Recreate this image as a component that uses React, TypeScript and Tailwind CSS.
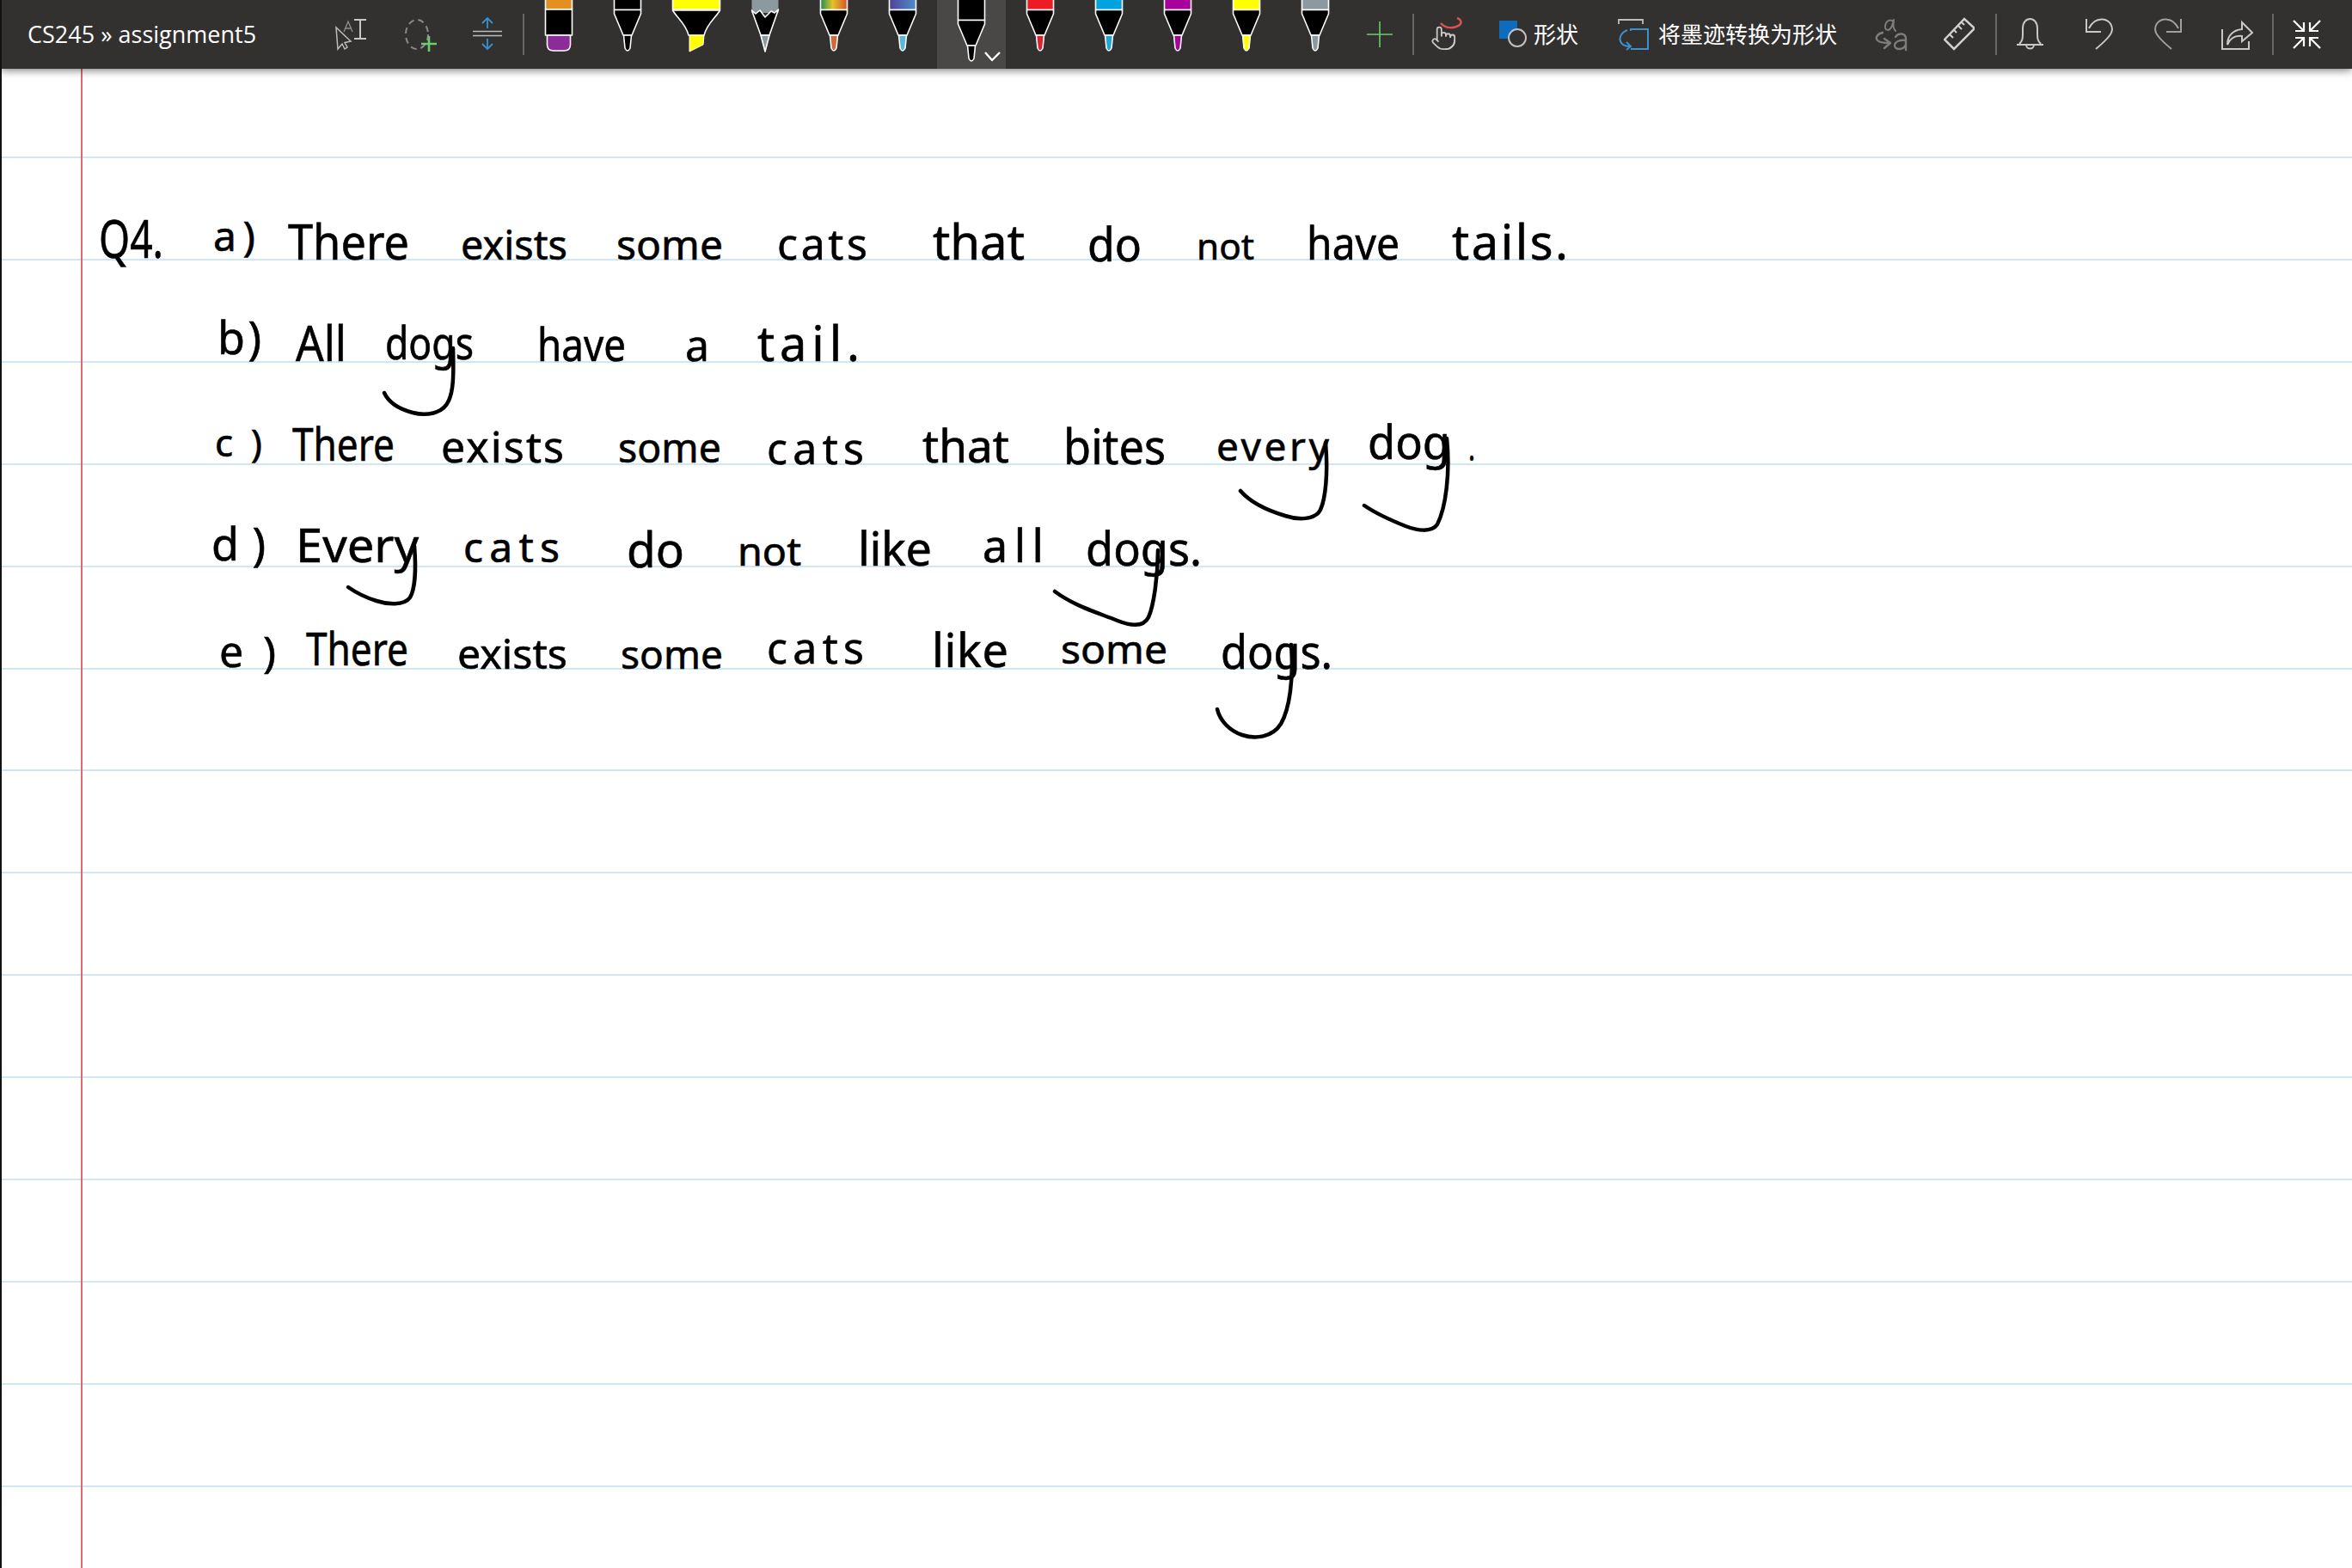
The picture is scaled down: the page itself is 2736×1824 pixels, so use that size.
import React from "react";

type Word = { t: string; x: number; x2: number; y: number; s: number; loose?: boolean };

const WORDS: Word[] = [
  // line 1
  { t: "Q4.", x: 115, x2: 190, y: 300, s: 62 },
  { t: "a)", x: 248, x2: 297, y: 292, s: 48, loose: true },
  { t: "There", x: 335, x2: 476, y: 302, s: 56 },
  { t: "exists", x: 536, x2: 660, y: 302, s: 48 },
  { t: "some", x: 717, x2: 841, y: 302, s: 48 },
  { t: "cats", x: 904, x2: 1009, y: 302, s: 50, loose: true },
  { t: "that", x: 1085, x2: 1192, y: 302, s: 56 },
  { t: "do", x: 1265, x2: 1328, y: 304, s: 54 },
  { t: "not", x: 1392, x2: 1459, y: 302, s: 42 },
  { t: "have", x: 1520, x2: 1628, y: 302, s: 52 },
  { t: "tails.", x: 1689, x2: 1824, y: 302, s: 56, loose: true },
  // line 2
  { t: "b)", x: 253, x2: 304, y: 412, s: 52, loose: true },
  { t: "All", x: 344, x2: 403, y: 420, s: 56 },
  { t: "dogs", x: 448, x2: 551, y: 418, s: 52 },
  { t: "have", x: 625, x2: 728, y: 420, s: 52 },
  { t: "a", x: 797, x2: 832, y: 420, s: 50, loose: true },
  { t: "tail.", x: 881, x2: 1000, y: 420, s: 56, loose: true },
  // line 3
  { t: "c)", x: 250, x2: 305, y: 531, s: 44, loose: true },
  { t: "There", x: 340, x2: 459, y: 536, s: 52 },
  { t: "exists", x: 513, x2: 656, y: 538, s: 50, loose: true },
  { t: "some", x: 719, x2: 839, y: 538, s: 47 },
  { t: "cats", x: 892, x2: 1005, y: 540, s: 50, loose: true },
  { t: "that", x: 1073, x2: 1174, y: 538, s: 53 },
  { t: "bites", x: 1237, x2: 1356, y: 540, s: 56 },
  { t: "every", x: 1415, x2: 1546, y: 536, s: 46, loose: true },
  { t: "dog", x: 1591, x2: 1687, y: 534, s: 54 },
  { t: ".", x: 1708, x2: 1716, y: 536, s: 44 },
  // line 4
  { t: "d)", x: 246, x2: 309, y: 652, s: 52, loose: true },
  { t: "Every", x: 344, x2: 487, y: 654, s: 54 },
  { t: "cats", x: 539, x2: 651, y: 654, s: 48, loose: true },
  { t: "do", x: 729, x2: 796, y: 660, s: 56 },
  { t: "not", x: 858, x2: 932, y: 658, s: 46 },
  { t: "like", x: 998, x2: 1084, y: 658, s: 54, loose: true },
  { t: "all", x: 1143, x2: 1214, y: 654, s: 52, loose: true },
  { t: "dogs.", x: 1263, x2: 1398, y: 658, s: 54 },
  // line 5
  { t: "e)", x: 255, x2: 321, y: 776, s: 50, loose: true },
  { t: "There", x: 356, x2: 475, y: 774, s: 52 },
  { t: "exists", x: 532, x2: 660, y: 778, s: 48 },
  { t: "some", x: 722, x2: 841, y: 778, s: 46 },
  { t: "cats", x: 892, x2: 1005, y: 772, s: 50, loose: true },
  { t: "like", x: 1084, x2: 1173, y: 776, s: 54, loose: true },
  { t: "some", x: 1234, x2: 1358, y: 772, s: 46 },
  { t: "dogs.", x: 1420, x2: 1550, y: 778, s: 54 },
];

// long pen strokes under g and y
const TAILS = [
  "M527 405 C528 440 527 455 522 466 C515 482 495 484 480 480 C465 476 452 468 447 457",
  "M1542 515 C1545 550 1542 580 1536 593 C1530 605 1510 605 1495 600 C1475 594 1455 585 1443 571",
  "M1683 510 C1687 550 1682 590 1672 610 C1665 620 1648 617 1635 612 C1620 606 1600 597 1587 588",
  "M482 635 C484 660 483 685 477 695 C470 705 450 703 438 699 C425 695 415 690 405 683",
  "M1347 640 C1347 670 1342 705 1336 718 C1330 730 1315 728 1300 722 C1275 712 1250 705 1227 688",
  "M1502 750 C1505 790 1500 825 1490 842 C1480 858 1460 860 1445 855 C1430 850 1419 838 1416 825",
];

const PENS = [
  { kind: "marker", color: "#e38f22", tip: "#8e2c97" },
  { kind: "pen", color: "#000000", tip: "#000000" },
  { kind: "highlighter", color: "#ffff00", tip: "#ffff00" },
  { kind: "pencil", color: "#8c9aa0", tip: "#8c9aa0" },
  { kind: "pen", color: "url(#rainbow)", tip: "#cf6a3e" },
  { kind: "pen", color: "url(#galaxy)", tip: "#5bb8d4" },
  { kind: "selected", color: "#000000", tip: "#000000" },
  { kind: "pen", color: "#ed1c24", tip: "#d9232e" },
  { kind: "pen", color: "#00a2e0", tip: "#22a5d8" },
  { kind: "pen", color: "#a8009a", tip: "#a8009a" },
  { kind: "pen", color: "#ffff00", tip: "#ffff00" },
  { kind: "pen", color: "#8c9aa0", tip: "#8c9aa0" },
];

function Pen({ kind, color, tip }: { kind: string; color: string; tip: string }) {
  return (
    <div className={kind === "selected" ? "w-[80px] h-[80px] bg-[#4a4846]" : "w-[80px] h-[80px]"}>
      <svg width="80" height="80" viewBox="0 0 80 80" stroke="#fff" strokeWidth="1.6" strokeLinejoin="round">
        {kind === "marker" && (
          <g>
            <rect x="24.5" y="-3" width="31" height="14" fill={color} />
            <rect x="24.5" y="11" width="31" height="30" fill="#000" />
            <path d="M26.5 41 H53.5 V52 Q53.5 59 46 59 H34 Q26.5 59 26.5 52 Z" fill={tip} />
          </g>
        )}
        {kind === "pen" && <PenBody color={color} tip={tip} />}
        {kind === "selected" && (
          <g>
            <g transform="translate(0 12)">
              <PenBody color={color} tip={tip} />
            </g>
            <path d="M56 61 L64 70 L73 61" fill="none" strokeWidth="2.4" />
          </g>
        )}
        {kind === "highlighter" && (
          <g>
            <rect x="12.5" y="-3" width="55" height="14" fill={color} />
            <path d="M12.5 12 C17 20 28 28 31 41 H49 C52 28 63 20 67.5 12 Z" fill="#000" />
            <path d="M32 41 H49 L48 52 L32 60 Z" fill={tip} strokeWidth="1" />
          </g>
        )}
        {kind === "pencil" && (
          <g>
            <rect x="24.5" y="-3" width="31" height="18" fill={color} stroke="none" />
            <path d="M24.5 12 L29 16 L34 12 L40 20 L47 13 L51 15 L55.5 11 L45 41 H35 Z" fill="#000" />
            <path d="M35 41 H45 L40 60 Z" fill={tip} />
          </g>
        )}
      </svg>
    </div>
  );
}

function PenBody({ color, tip }: { color: string; tip: string }) {
  return (
    <g>
      <rect x="24.5" y="-16" width="31" height="27.5" fill={color} />
      <path d="M24.5 11.5 V16 L35 41 H45 L55.5 16 V11.5 Z" fill="#000" />
      <path d="M35.5 41 L37 56 Q40 62 43 56 L44.5 41 Z" fill={tip} />
    </g>
  );
}

function Sep({ ml }: { ml: string }) {
  return <div className={`${ml} w-[2px] h-[48px] bg-[#6a6866] shrink-0`} />;
}

export default function App() {
  return (
    <div className="relative w-[2736px] h-[1824px] overflow-hidden bg-white border-l-2 border-[#111] box-border">
      {/* Toolbar */}
      <div className="relative z-10 -ml-[2px] flex items-center h-[80px] w-[2736px] bg-[#323130] shadow-[0_2px_9px_rgba(0,0,0,0.5)] text-white [font-family:'Open_Sans','Noto_Sans_CJK_SC',sans-serif]">
        <div className="w-[390px] pl-[32px] text-[27px] shrink-0">CS245 » assignment5</div>

        <svg width="36" height="40" viewBox="0 0 36 40" fill="none" className="shrink-0">
          <path d="M1 12 L3 37 L8 31 L11 37 L14 35 L11 29.5 L18 28 Z" stroke="#bdbdbd" strokeWidth="1.5" />
          <path d="M10 17 L15 5 L20 17 M12 13 H18" stroke="#8f8f8f" strokeWidth="1.3" />
          <path d="M22 3 H36 M29 3 V25 M22 25 H36" stroke="#c8c8c8" strokeWidth="2" />
        </svg>

        <svg width="39" height="40" viewBox="0 0 39 40" fill="none" className="ml-[44px] shrink-0">
          <ellipse cx="15" cy="20" rx="13" ry="17" stroke="#8a8a8a" strokeWidth="2" strokeDasharray="7 5" />
          <path d="M29 22 V40 M20 31 H38" stroke="#6ccb6c" strokeWidth="2.6" />
        </svg>

        <svg width="34" height="40" viewBox="0 0 34 40" fill="none" className="ml-[41px] shrink-0">
          <path d="M0 16.5 H34 M0 21.5 H34" stroke="#bdbdbd" strokeWidth="1.6" />
          <path d="M17 1 V13 M11 7 L17 1 L23 7 M17 25 V37 M11 31 L17 37 L23 31" stroke="#3a8fd0" strokeWidth="1.8" />
        </svg>

        <Sep ml="ml-[24px]" />

        <div className="flex shrink-0">
          {PENS.map((p, i) => (
            <Pen key={i} {...p} />
          ))}
        </div>

        <svg width="30" height="30" viewBox="0 0 30 30" fill="none" className="ml-[20px] shrink-0">
          <path d="M15 0 V30 M0 15 H30" stroke="#6ccb6c" strokeWidth="1.6" />
        </svg>

        <Sep ml="ml-[23px]" />

        <svg width="37" height="40" viewBox="0 0 37 40" fill="none" className="ml-[20px] shrink-0">
          <g transform="translate(-1 9) scale(1.28)" stroke="#c8c8c8" strokeWidth="1.4" strokeLinecap="round" strokeLinejoin="round">
            <path d="M22 14a8 8 0 0 1-8 8" />
            <path d="M18 11v-1a2 2 0 0 0-2-2a2 2 0 0 0-2 2" />
            <path d="M14 10V9a2 2 0 0 0-2-2a2 2 0 0 0-2 2v1" />
            <path d="M10 9.5V4a2 2 0 0 0-2-2a2 2 0 0 0-2 2v10" />
            <path d="M18 11a2 2 0 1 1 4 0v3a8 8 0 0 1-8 8h-2c-2.8 0-4.5-.86-5.99-2.34l-3.6-3.6a2 2 0 0 1 2.83-2.82L7 15" />
          </g>
          <path d="M11 7 C16 13 26 14 33 9 C36 6 34 2 30 1" stroke="#d9534f" strokeWidth="2.5" />
        </svg>

        <svg width="32" height="40" viewBox="0 0 32 40" fill="none" className="ml-[42px] shrink-0">
          <rect x="0" y="4" width="21" height="21" fill="#0f6cbd" />
          <circle cx="21" cy="24" r="10" fill="#323130" stroke="#c0c0c0" strokeWidth="2" />
        </svg>
        <span className="ml-[8px] text-[26px] leading-none shrink-0">形状</span>

        <svg width="36" height="40" viewBox="0 0 36 40" fill="none" className="ml-[46px] shrink-0">
          <path d="M1 8 V3 H29 V8 M1 3 H29" stroke="#bdbdbd" strokeWidth="1.8" />
          <path d="M15 16 V14 H35 V37 H15" stroke="#3f8fcb" strokeWidth="2" />
          <path d="M11 15 C3 18 0 26 5 31 C7 33 10 34 14 34 M10 29 L15 34 L10 38" stroke="#3f8fcb" strokeWidth="2" />
        </svg>
        <span className="ml-[11px] text-[26px] leading-none shrink-0">将墨迹转换为形状</span>

        <svg width="38" height="40" viewBox="0 0 38 40" fill="none" className="ml-[44px] shrink-0" stroke="#7d7d7d" strokeWidth="2.4" strokeLinecap="round" strokeLinejoin="round">
          <path d="M22 6 C19 1 13 4 12 10 C11 16 17 17 20 10 L22 3 C21 8 21 13 24 16" strokeWidth="2" />
          <path d="M9 18 C3 19 0 24 3 27 C5 29 10 30 17 30 M11 25 L18 30 L11 36" />
          <path d="M24 23 C27 18 36 18 36 25 V38 M36 27 C30 26 23 28 23 33 C23 38 33 39 36 32" />
        </svg>

        <svg width="36" height="40" viewBox="0 0 36 40" fill="none" className="ml-[42px] shrink-0" stroke="#d0d0d0" strokeWidth="2.5">
          <path d="M1 26 L24 2 L36 13 L12 37 Z" />
          <path d="M7 20 L11 24 M12 15 L15 18 M17 10 L21 14 M21 6 L24 9" strokeWidth="2" />
        </svg>

        <Sep ml="ml-[24px]" />

        <svg width="33" height="40" viewBox="0 0 33 40" fill="none" className="ml-[22px] shrink-0" stroke="#c8c8c8" strokeWidth="2">
          <path d="M4 31 C7 28 8 26 8 20 V13 C8 6 12 2 16.5 2 C21 2 25 6 25 13 V20 C25 26 26 28 29 31" />
          <path d="M1 32 H32 M12 32 A4.5 4.5 0 0 0 21 32" />
        </svg>

        <svg width="32" height="40" viewBox="0 0 32 40" fill="none" className="ml-[48px] shrink-0" stroke="#c8c8c8" strokeWidth="2">
          <path d="M1 2 V17 H18" />
          <path d="M4 13 C8 5 14 2 20 2.5 C28 3 33 11 30 18 C28 23 18 32 12 37" />
        </svg>

        <svg width="32" height="40" viewBox="0 0 32 40" fill="none" className="ml-[48px] shrink-0" stroke="#a0a0a0" strokeWidth="2">
          <path d="M31 2 V17 H14" />
          <path d="M28 13 C24 5 18 2 12 2.5 C4 3 -1 11 2 18 C4 23 14 32 20 37" />
        </svg>

        <svg width="37" height="40" viewBox="0 0 37 40" fill="none" className="ml-[46px] shrink-0" stroke="#c8c8c8" strokeWidth="2">
          <path d="M1 14 V37 H32 V28" />
          <path d="M7 32 C7 22 13 15 24 14 V6 L36 18 L24 28 V22 C16 21 10 25 7 32 Z" />
        </svg>

        <Sep ml="ml-[22px]" />

        <svg width="33" height="40" viewBox="0 0 33 40" fill="none" className="ml-[22px] shrink-0" stroke="#ffffff" strokeWidth="2.2">
          <path d="M1 4 L13 16 M3 16 H13 V6 M32 4 L20 16 M20 6 V16 H30 M1 36 L13 24 M3 24 H13 V34 M32 36 L20 24 M20 34 V24 H30" />
        </svg>

        {/* gradients for the rainbow and galaxy pens */}
        <svg width="0" height="0" className="absolute">
          <defs>
            <linearGradient id="rainbow" x1="0" x2="1" y1="0" y2="0">
              <stop offset="0" stopColor="#1c8f4e" />
              <stop offset="0.45" stopColor="#e2c32a" />
              <stop offset="1" stopColor="#d8522c" />
            </linearGradient>
            <linearGradient id="galaxy" x1="0" x2="1" y1="0" y2="0">
              <stop offset="0" stopColor="#50409a" />
              <stop offset="1" stopColor="#4f8fc8" />
            </linearGradient>
          </defs>
        </svg>
      </div>

      {/* Ruled page */}
      <div className="flex flex-col">
        <div className="h-[104px] border-b-2 border-[#cfe6f3]" />
        {Array.from({ length: 13 }).map((_, i) => (
          <div key={i} className="h-[118.92px] border-b-2 border-[#cfe6f3]" />
        ))}
      </div>

      {/* Margin line */}
      <div className="absolute left-[92px] top-[80px] bottom-0 w-[2px] bg-[#dc6a70]" />

      {/* Ink */}
      <svg width="2736" height="1824" viewBox="0 0 2736 1824" className="absolute -left-[2px] top-0 [font-family:'Noto_Sans',sans-serif]">
        {WORDS.map((w, i) => (
          <text
            key={i}
            x={w.x}
            y={w.y}
            fontSize={w.s}
            textLength={w.x2 - w.x}
            lengthAdjust={w.loose ? "spacing" : "spacingAndGlyphs"}
            fill="#000"
            stroke="#000"
            strokeWidth="0.6"
          >
            {w.t}
          </text>
        ))}
        {TAILS.map((d, i) => (
          <path key={i} d={d} fill="none" stroke="#000" strokeWidth="4.5" strokeLinecap="round" />
        ))}
      </svg>
    </div>
  );
}
